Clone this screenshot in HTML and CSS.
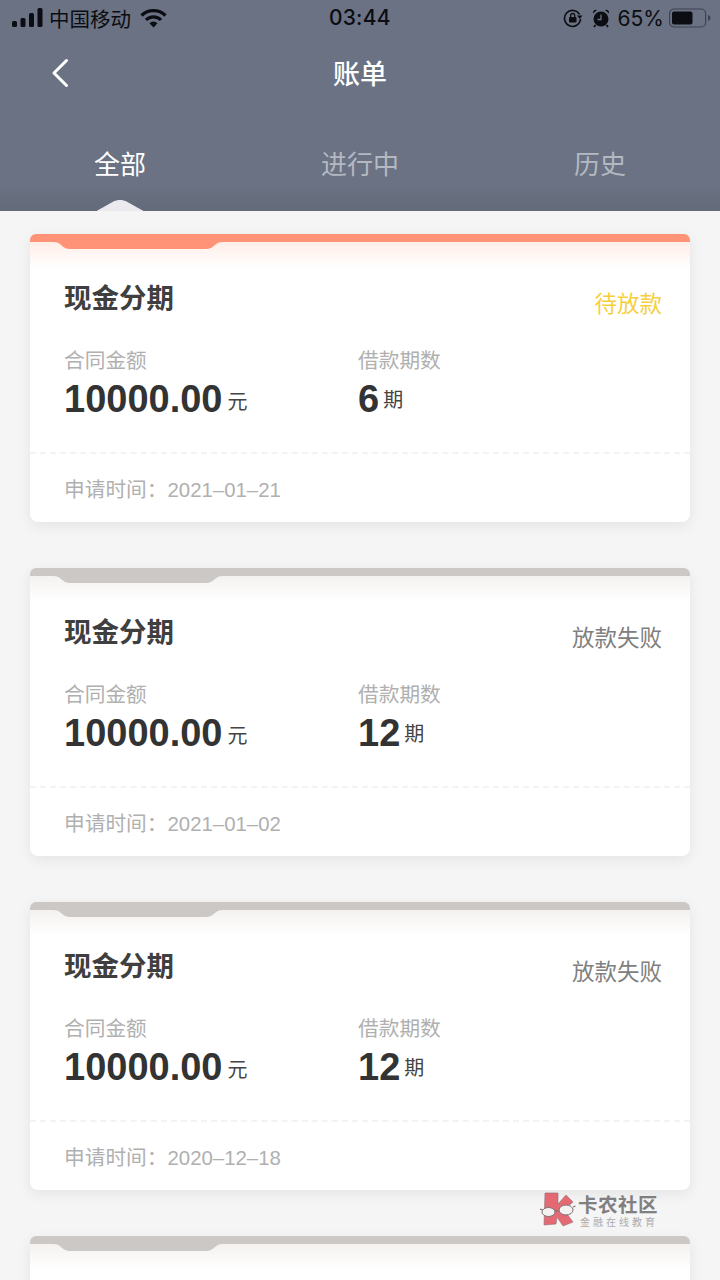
FILE: index.html
```html
<!DOCTYPE html>
<html lang="zh-CN">
<head>
    <meta charset="UTF-8">
    <meta name="viewport" content="width=device-width, initial-scale=1.0">
    <title>账单</title>
    <link rel="stylesheet" href="styles.css">
</head>
<body>
<div class="page">
    <header class="top">
        <!-- Status bar -->
        <div class="status">
            <div class="status-left">
                <svg class="signal" width="31" height="20" viewBox="0 0 31 20">
                    <rect x="0" y="13" width="5" height="6" rx="1.5"/>
                    <rect x="8.500" y="10" width="5" height="9" rx="1.5"/>
                    <rect x="17" y="5" width="5" height="14" rx="1.5"/>
                    <rect x="25.500" y="0" width="5" height="19" rx="1.5"/>
                </svg>
                <span class="carrier">中国移动</span>
                <svg class="wifi" width="27" height="20" viewBox="0 0 27 20">
                    <path d="M1.500 7.500a17 17 0 0 1 24 0" fill="none" stroke="#0b0d12" stroke-width="3.200"/>
                    <path d="M6 12a10.500 10.500 0 0 1 15 0" fill="none" stroke="#0b0d12" stroke-width="3.200"/>
                    <path d="M9.500 15.200a5.500 5.500 0 0 1 8 0L13.500 19.500z" fill="#0b0d12"/>
                </svg>
            </div>
            <div class="status-time">03:44</div>
            <div class="status-right">
                <svg class="lock" width="20" height="20" viewBox="0 0 20 20">
                    <path d="M16.500 6.500A8 8 0 1 0 17.500 11" fill="none" stroke="#0b0d12" stroke-width="1.600"/>
                    <path d="M14 7.500h5.500l-2.700 3.500z" fill="#0b0d12"/>
                    <rect x="6" y="9" width="7.500" height="5.500" rx="1" fill="#0b0d12"/>
                    <path d="M7.700 9V7.500a2 2 0 0 1 4 0V9" fill="none" stroke="#0b0d12" stroke-width="1.300"/>
                </svg>
                <svg class="alarm" width="18" height="20" viewBox="0 0 18 20">
                    <circle cx="9" cy="11" r="7.500" fill="#0b0d12"/>
                    <path d="M1 5.500a3 3 0 0 1 4-3.500zM17 5.500a3 3 0 0 0-4-3.500z" fill="#0b0d12"/>
                    <path d="M3.500 17l-1.500 2M14.500 17l1.500 2" stroke="#0b0d12" stroke-width="1.800"/>
                    <path d="M9 6.500V11.500H5.500" fill="none" stroke="#6a7283" stroke-width="1.300"/>
                </svg>
                <span class="percent">65%</span>
                <svg class="battery" width="42" height="20" viewBox="0 0 42 20">
                    <rect x=".6" y="1" width="36" height="18" rx="4.500" fill="none" stroke="#3e4350" stroke-width="1.200"/>
                    <rect x="3" y="3.500" width="20.500" height="13" rx="2" fill="#0b0d12"/>
                    <path d="M39 7v6c1.500-.5 2.500-1.800 2.500-3S40.500 7.500 39 7z" fill="#3e4350"/>
                </svg>
            </div>
        </div>

        <!-- Title -->
        <div class="nav">
            <svg class="back" width="18" height="30" viewBox="0 0 18 30">
                <path d="M15.500 2.500L3 15l12.500 12.500" fill="none" stroke="#fff" stroke-width="3" stroke-linecap="round" stroke-linejoin="round"/>
            </svg>
            <h1 class="title">账单</h1>
        </div>

        <!-- Tabs -->
        <nav class="tabs">
            <a class="tab active">全部</a>
            <a class="tab">进行中</a>
            <a class="tab">历史</a>
        </nav>
    </header>

    <main class="list">
        <section class="card">
            <svg class="strip" width="660" height="16" viewBox="0 0 660 16" preserveAspectRatio="none">
                <path class="strip-fill pending" d="M0 8V6a6 6 0 0 1 6-6h648a6 6 0 0 1 6 6v2H193c-4 0-6 1-8 3-3 2.500-5 4-9 4H40c-4 0-6-1.500-9-4-2-2-4-3-8-3z"/>
            </svg>
            <div class="glow pending-glow"></div>
            <div class="card-head">
                <h2 class="card-title">现金分期</h2>
                <span class="state waiting">待放款</span>
            </div>
            <div class="stats">
                <div class="stat stat-amount">
                    <div class="label">合同金额</div>
                    <div class="value"><b>10000.00</b><span>元</span></div>
                </div>
                <div class="stat stat-term">
                    <div class="label">借款期数</div>
                    <div class="value"><b>6</b><span>期</span></div>
                </div>
            </div>
            <div class="card-foot">申请时间：<span class="date">2021–01–21</span></div>
        </section>

        <section class="card">
            <svg class="strip" width="660" height="16" viewBox="0 0 660 16" preserveAspectRatio="none">
                <path class="strip-fill" d="M0 8V6a6 6 0 0 1 6-6h648a6 6 0 0 1 6 6v2H193c-4 0-6 1-8 3-3 2.500-5 4-9 4H40c-4 0-6-1.500-9-4-2-2-4-3-8-3z"/>
            </svg>
            <div class="glow"></div>
            <div class="card-head">
                <h2 class="card-title">现金分期</h2>
                <span class="state">放款失败</span>
            </div>
            <div class="stats">
                <div class="stat stat-amount">
                    <div class="label">合同金额</div>
                    <div class="value"><b>10000.00</b><span>元</span></div>
                </div>
                <div class="stat stat-term">
                    <div class="label">借款期数</div>
                    <div class="value"><b>12</b><span>期</span></div>
                </div>
            </div>
            <div class="card-foot">申请时间：<span class="date">2021–01–02</span></div>
        </section>

        <section class="card">
            <svg class="strip" width="660" height="16" viewBox="0 0 660 16" preserveAspectRatio="none">
                <path class="strip-fill" d="M0 8V6a6 6 0 0 1 6-6h648a6 6 0 0 1 6 6v2H193c-4 0-6 1-8 3-3 2.500-5 4-9 4H40c-4 0-6-1.500-9-4-2-2-4-3-8-3z"/>
            </svg>
            <div class="glow"></div>
            <div class="card-head">
                <h2 class="card-title">现金分期</h2>
                <span class="state">放款失败</span>
            </div>
            <div class="stats">
                <div class="stat stat-amount">
                    <div class="label">合同金额</div>
                    <div class="value"><b>10000.00</b><span>元</span></div>
                </div>
                <div class="stat stat-term">
                    <div class="label">借款期数</div>
                    <div class="value"><b>12</b><span>期</span></div>
                </div>
            </div>
            <div class="card-foot">申请时间：<span class="date">2020–12–18</span></div>
        </section>

        <section class="card">
            <svg class="strip" width="660" height="16" viewBox="0 0 660 16" preserveAspectRatio="none">
                <path class="strip-fill" d="M0 8V6a6 6 0 0 1 6-6h648a6 6 0 0 1 6 6v2H193c-4 0-6 1-8 3-3 2.500-5 4-9 4H40c-4 0-6-1.500-9-4-2-2-4-3-8-3z"/>
            </svg>
            <div class="glow"></div>
        </section>
    </main>

    <!-- Forum watermark -->
    <div class="mark">
        <svg class="mark-logo" width="36" height="36" viewBox="0 0 36 36">
            <path d="M5 1h13v11L26 3l7 7-9 8 9 12-10 4-6-9-1 7-12 1z" fill="#e4626d" stroke="#8a6a6e" stroke-width=".6"/>
            <path d="M0 17l3 1M14 19h5M33 15l2.500-1" stroke="#77696b" stroke-width="1.200" fill="none"/>
            <ellipse cx="8.500" cy="20" rx="6.500" ry="4.500" fill="#f6f1f1" stroke="#77696b" stroke-width="1"/>
            <ellipse cx="26" cy="18" rx="7" ry="5" fill="#f6f1f1" stroke="#77696b" stroke-width="1"/>
        </svg>
        <div class="mark-text">
            <div class="mark-name">卡农社区</div>
            <div class="mark-sub">金融在线教育</div>
        </div>
    </div>
</div>
</body>
</html>
```

FILE: styles.css
```css
* {
    box-sizing: border-box;
}

html, body {
    margin: 0;
    padding: 0;
}

body {
    font-family: "Liberation Sans", "Noto Sans CJK SC", sans-serif;
    background: #f5f5f5;
}

.page {
    position: relative;
    width: 720px;
    height: 1280px;
    overflow: hidden;
    background: #f5f5f5;
}

/* Header */
.top {
    height: 211px;
    background: linear-gradient(#6a7283 0, #6a7283 185px, #636a79 211px);
    display: flex;
    flex-direction: column;
}

.status {
    height: 36px;
    padding: 0 9px 0 12px;
    display: flex;
    justify-content: space-between;
    align-items: center;
    position: relative;
    color: #0b0d12;
}

.status-left,
.status-right {
    display: flex;
    align-items: center;
}

.signal {
    fill: #0b0d12;
    margin-right: 6px;
}

.carrier {
    font-family: "Noto Sans CJK SC", sans-serif;
    font-size: 20.500px;
    line-height: 24px;
}

.wifi {
    margin-left: 9px;
}

.status-time {
    font-family: Inter, sans-serif;
    font-size: 21px;
    font-weight: 500;
    letter-spacing: 0.2px;
    position: absolute;
    left: 329px;
    top: 6px;
    line-height: 24px;
}

.lock {
    margin-right: 9px;
}

.alarm {
    margin-right: 8px;
}

.percent {
    font-family: Inter, sans-serif;
    font-size: 21px;
    margin-right: 5px;
}

.nav {
    height: 74px;
    position: relative;
    display: flex;
    justify-content: center;
    align-items: center;
}

.back {
    position: absolute;
    left: 51px;
    top: 22px;
}

.title {
    margin: 0;
    font-family: "Noto Sans CJK SC", sans-serif;
    font-size: 27px;
    font-weight: 500;
    color: #fff;
    line-height: 40px;
}

.tabs {
    display: flex;
    padding-top: 2px;
}

.tab {
    flex: 1;
    text-align: center;
    font-family: "Noto Sans CJK SC", sans-serif;
    font-size: 26px;
    line-height: 38px;
    color: #b4b8c1;
    position: relative;
    height: 99px;
    padding-top: 32px;
}

.tab.active {
    color: #fff;
}

.tab.active::after {
    content: '';
    position: absolute;
    left: 50%;
    top: 87px;
    width: 47px;
    height: 12px;
    margin-left: -23.5px;
    background: #ebebef;
    clip-path: path('M0 12L17 2.500C21 .5 26 .5 30 2.500L47 12z');
}

/* Cards */
.list {
    padding: 23px 30px 0;
    display: flex;
    flex-direction: column;
    gap: 46px;
}

.card {
    position: relative;
    height: 288px;
    flex-shrink: 0;
    background: #fff;
    border-radius: 6px 6px 8px 8px;
    box-shadow: 0 4px 14px rgba(0, 0, 0, 0.07);
}

.strip {
    display: block;
    position: absolute;
    left: 0;
    top: 0;
    z-index: 1;
}

.strip-fill {
    fill: #ccc8c6;
}

.strip-fill.pending {
    fill: #ff9378;
}

.glow {
    position: absolute;
    left: 0;
    right: 0;
    top: 8px;
    height: 26px;
    background: linear-gradient(#f4f2f1, #fff);
}

.glow.pending-glow {
    background: linear-gradient(#ffeee8, #fff);
}

.card-head {
    position: relative;
    display: flex;
    justify-content: space-between;
    padding: 42px 28px 0 34px;
    height: 100px;
}

.card-title {
    margin: 0;
    font-family: "Noto Sans CJK SC", sans-serif;
    font-size: 27.500px;
    font-weight: 700;
    line-height: 40px;
    color: #3f3f3f;
}

.state {
    font-family: "Noto Sans CJK SC", sans-serif;
    font-size: 22.500px;
    line-height: 34px;
    margin-top: 9px;
    color: #808080;
}

.state.waiting {
    color: #f7cf3d;
}

.stats {
    display: flex;
    padding-left: 34px;
    height: 120px;
    border-bottom: 2px dashed #f3f3f3;
}

.stat-amount {
    width: 294px;
}

.label {
    font-family: "Noto Sans CJK SC", sans-serif;
    font-size: 20.700px;
    line-height: 30px;
    color: #b0b0b0;
    margin-top: 10px;
}

.value {
    margin-top: 3px;
    line-height: 44px;
    color: #333;
    white-space: nowrap;
}

.value b {
    font-size: 38px;
    font-weight: 700;
}

.value span {
    font-family: "Noto Sans CJK SC", sans-serif;
    font-size: 20px;
    margin-left: 5px;
    color: #444;
    vertical-align: 3px;
}

.stat-term .value span {
    margin-left: 4px;
    vertical-align: 5px;
}

.card-foot {
    padding: 18px 0 0 34px;
    font-family: "Noto Sans CJK SC", sans-serif;
    font-size: 20.700px;
    line-height: 32px;
    color: #b0b0b0;
}

.date {
    font-family: "Liberation Sans", sans-serif;
    font-size: 20.400px;
}

/* Watermark */
.mark {
    position: absolute;
    left: 540px;
    top: 1192px;
    display: flex;
    align-items: flex-start;
    gap: 2px;
    opacity: 0.95;
}

.mark-text {
    padding-top: 1px;
}

.mark-name {
    font-family: "Noto Sans CJK SC", sans-serif;
    font-size: 19.500px;
    font-weight: 700;
    line-height: 22px;
    letter-spacing: .5px;
    color: #7a7a7a;
}

.mark-sub {
    font-family: "Noto Sans CJK SC", sans-serif;
    font-size: 10px;
    line-height: 13px;
    letter-spacing: 3px;
    color: #a9a9a9;
    padding-left: 2px;
}
```
